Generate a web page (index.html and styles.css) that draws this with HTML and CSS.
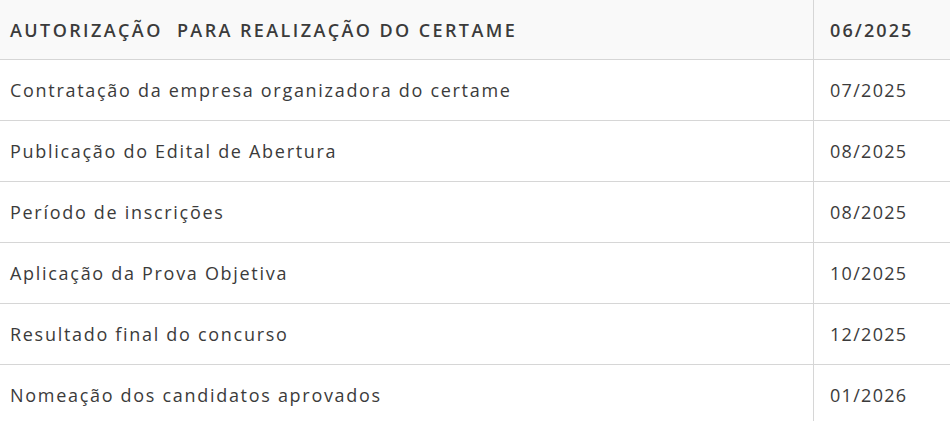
FILE: index.html
```html
<!DOCTYPE html>
<html lang="pt-BR">
<head>
<meta charset="utf-8">
<link rel="stylesheet" href="styles.css">
</head>
<body>
<table class="cronograma">
  <thead>
    <tr class="head-row">
      <th class="etapa">AUTORIZAÇÃO&nbsp; PARA REALIZAÇÃO DO CERTAME</th>
      <th class="data">06/2025</th>
    </tr>
  </thead>
  <tbody>
    <tr><td class="etapa">Contratação da empresa organizadora do certame</td><td class="data">07/2025</td></tr>
    <tr><td class="etapa">Publicação do Edital de Abertura</td><td class="data">08/2025</td></tr>
    <tr><td class="etapa">Período de inscrições</td><td class="data">08/2025</td></tr>
    <tr><td class="etapa">Aplicação da Prova Objetiva</td><td class="data">10/2025</td></tr>
    <tr><td class="etapa">Resultado final do concurso</td><td class="data">12/2025</td></tr>
    <tr><td class="etapa">Nomeação dos candidatos aprovados</td><td class="data">01/2026</td></tr>
  </tbody>
</table>
</body>
</html>
```

FILE: styles.css
```css
html, body {
  margin: 0;
  padding: 0;
  background: #ffffff;
}
body {
  font-family: "Open Sans", "Liberation Sans", sans-serif;
  color: #3b3b3b;
}
.cronograma {
  width: 950px;
  border-collapse: collapse;
  table-layout: fixed;
}
.cronograma th,
.cronograma td {
  padding: 0 0 0 10px;
  text-align: left;
  vertical-align: middle;
  border-bottom: 1px solid #d6d6d6;
  font-size: 18px;
  letter-spacing: 1.7px;
}
.cronograma .etapa {
  width: 803px;
}
.cronograma .data {
  border-left: 1px solid #d6d6d6;
  padding-left: 16px;
  letter-spacing: 1.3px;
}
.head-row th {
  height: 59px;
  background: #f9f9f9;
  font-weight: 600;
  font-size: 18px;
  letter-spacing: 2.4px;
}
.head-row th.data {
  letter-spacing: 2.1px;
}
tbody td {
  height: 60px;
  font-weight: 400;
}
```
